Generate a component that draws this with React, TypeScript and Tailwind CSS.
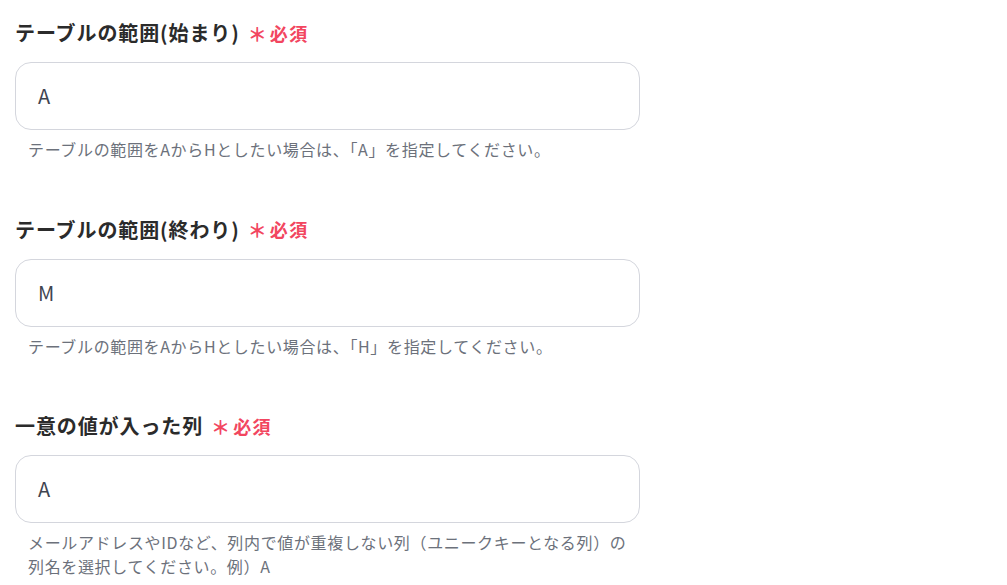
import React from "react";

const font = { fontFamily: '"Noto Sans CJK JP", "Noto Sans", sans-serif' };

function Field({ label, value, help }: { label: string; value: string; help: React.ReactNode }) {
  return (
    <div className="flex flex-col">
      <div className="flex items-center h-[28px]">
        <span className="text-[20px] font-bold text-[#2b2b2b] tracking-[0.9px]">{label}</span>
        <span className="ml-[8px] text-[19px] font-bold text-[#f2465f] leading-none">＊</span>
        <span className="ml-[3px] text-[18px] font-bold text-[#f2465f] tracking-[1.5px]">必須</span>
      </div>
      <div className="mt-[15px] w-[625px] h-[68px] rounded-[16px] border border-[#d4d6dd] bg-white flex items-center pl-[22px]">
        <span className="text-[20px] text-[#3f4550]">{value}</span>
      </div>
      <div className="mt-[7px] pl-[13px] text-[16px] leading-[24px] text-[#6c717b] tracking-[0.65px]">{help}</div>
    </div>
  );
}

export default function App() {
  return (
    <div className="w-[1007px] h-[585px] bg-white overflow-hidden pl-[15px] pt-[19px] flex flex-col gap-[54.5px]" style={font}>
      <Field
        label="テーブルの範囲(始まり)"
        value="A"
        help="テーブルの範囲をAからHとしたい場合は、「A」を指定してください。"
      />
      <Field
        label="テーブルの範囲(終わり)"
        value="M"
        help="テーブルの範囲をAからHとしたい場合は、「H」を指定してください。"
      />
      <Field
        label="一意の値が入った列"
        value="A"
        help={
          <>
            メールアドレスやIDなど、列内で値が重複しない列（ユニークキーとなる列）の
            <br />
            列名を選択してください。例）A
          </>
        }
      />
    </div>
  );
}
